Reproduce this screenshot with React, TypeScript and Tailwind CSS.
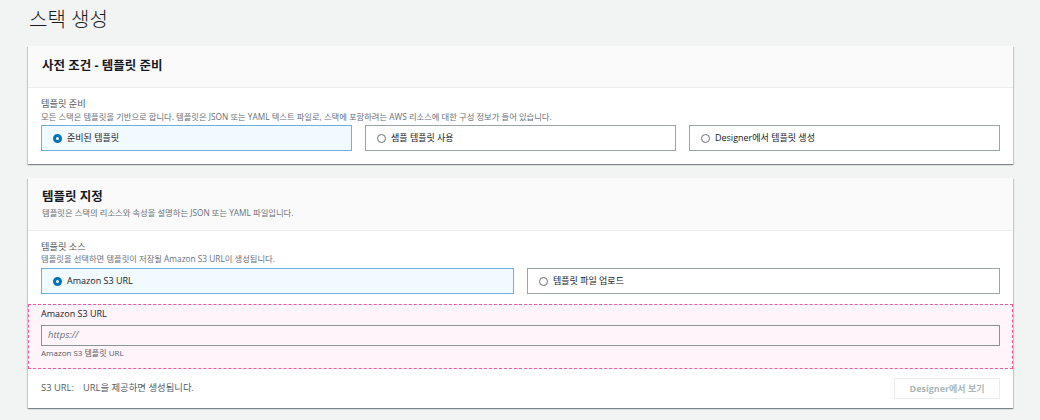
import React from "react";

const font = "font-['Open_Sans','Noto_Sans_CJK_KR',sans-serif]";
const panel =
  "bg-white shadow-[0_1px_1px_0_rgba(0,28,36,0.3),1px_1px_1px_0_rgba(0,28,36,0.15),-1px_1px_1px_0_rgba(0,28,36,0.15)]";

function Radio({ checked }: { checked?: boolean }) {
  return checked ? (
    <span className="h-[9px] w-[9px] shrink-0 rounded-full border-[3px] border-[#0073bb] bg-white" />
  ) : (
    <span className="h-[9px] w-[9px] shrink-0 rounded-full border border-[#687078] bg-white" />
  );
}

function Tile({ label, checked }: { label: string; checked?: boolean }) {
  return (
    <div
      className={
        checked
          ? "flex h-[26px] flex-1 items-center gap-[5px] border border-[#6fb0dc] bg-[#f1faff] px-[11px] text-[9px] text-[#16191f]"
          : "flex h-[26px] flex-1 items-center gap-[5px] border border-[#9ba5a6] bg-white px-[11px] text-[9px] text-[#16191f]"
      }
    >
      <Radio checked={checked} />
      <span>{label}</span>
    </div>
  );
}

export default function App() {
  return (
    <div className={`${font} min-h-[420px] bg-[#f2f3f3] pl-[28px] pr-[27px] text-[#16191f]`}>
      <h1 className="h-[46px] pl-[1px] pt-[7px] text-[20px] font-light leading-[26px]">스택 생성</h1>

      <section className={panel}>
        <div className="flex h-[42px] items-center border-b border-[#eaeded] bg-[#fafafa] px-[14px]">
          <h2 className="text-[12.5px] font-bold">사전 조건 - 템플릿 준비</h2>
        </div>
        <div className="px-[13px] pb-[13px] pt-[10px]">
          <div className="text-[9.2px] leading-[12px] text-[#545b64]">템플릿 준비</div>
          <div className="text-[8.3px] leading-[13px] text-[#687078]">
            모든 스택은 템플릿을 기반으로 합니다. 템플릿은 JSON 또는 YAML 텍스트 파일로, 스택에 포함하려는 AWS 리소스에 대한 구성 정보가 들어 있습니다.
          </div>
          <div className="mt-[2px] flex gap-[13px]">
            <Tile label="준비된 템플릿" checked />
            <Tile label="샘플 템플릿 사용" />
            <Tile label="Designer에서 템플릿 생성" />
          </div>
        </div>
      </section>

      <section className={`mt-[14px] ${panel}`}>
        <div className="flex h-[53px] flex-col justify-center border-b border-[#eaeded] bg-[#fafafa] px-[14px]">
          <h2 className="text-[12.5px] font-bold leading-[18px]">템플릿 지정</h2>
          <p className="text-[8.3px] leading-[14px] text-[#687078]">
            템플릿은 스택의 리소스와 속성을 설명하는 JSON 또는 YAML 파일입니다.
          </p>
        </div>
        <div className="px-[13px] pt-[10px]">
          <div className="text-[9.2px] leading-[12px] text-[#545b64]">템플릿 소스</div>
          <div className="text-[8.3px] leading-[12px] text-[#687078]">
            템플릿을 선택하면 템플릿이 저장될 Amazon S3 URL이 생성됩니다.
          </div>
          <div className="mt-[3px] flex gap-[13px]">
            <Tile label="Amazon S3 URL" checked />
            <Tile label="템플릿 파일 업로드" />
          </div>
        </div>
        <div className="mt-[10px] border border-dashed border-[#f2589c] bg-[#fff4f9] px-[12px] pb-[9px] pt-[2px]">
          <div className="text-[9px] leading-[14px] text-[#16191f]">Amazon S3 URL</div>
          <div className="mt-[4px] flex h-[21px] items-center border border-[#879596] px-[6px] text-[9.5px] italic text-[#687078]">
            https://
          </div>
          <div className="mt-[1px] text-[8px] leading-[12px] text-[#545b64]">Amazon S3 템플릿 URL</div>
        </div>
        <div className="flex h-[39px] items-center justify-between px-[13px]">
          <div className="text-[9.4px] text-[#545b64]">
            S3 URL:<span className="ml-[9px]">URL을 제공하면 생성됩니다.</span>
          </div>
          <div className="flex h-[21px] w-[106px] items-center justify-center border border-[#eaeded] bg-white text-[9px] font-bold text-[#aab7b8]">
            Designer에서 보기
          </div>
        </div>
      </section>
    </div>
  );
}
